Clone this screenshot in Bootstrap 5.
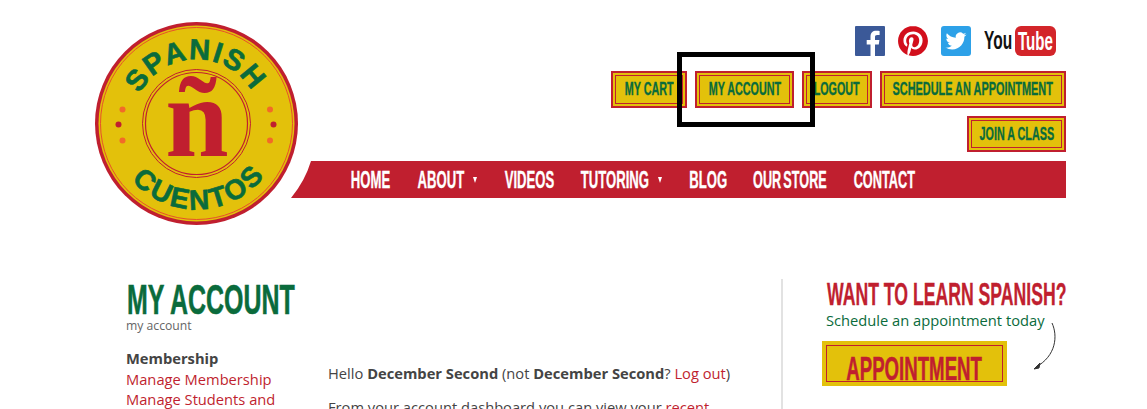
<!DOCTYPE html>
<html lang="en">
<head>
<meta charset="utf-8">
<title>My Account</title>
<link href="https://cdn.jsdelivr.net/npm/bootstrap@5.3.0/dist/css/bootstrap.min.css" rel="stylesheet">
<style>
html,body{height:409px;overflow:hidden;background:#fff}
body{font-family:"Open Sans",sans-serif;font-size:14.7px;line-height:20px;color:#444}
.sc-page{position:relative;width:1147px;height:409px;overflow:hidden;padding:22px 81px 0 95px}
.sc-logo{width:203px;height:203px;flex:none;position:relative;z-index:2;display:block}
.sc-head{height:257px}
.sc-right{flex:1;margin-left:-7px;padding-top:4px;min-width:0}
.sc-social{gap:13px;padding-right:10px;height:30px;margin-bottom:15px}
.sc-btns{width:455px;gap:8px;height:90px;margin-bottom:0}
.sc-narrow{font-family:"Liberation Sans",sans-serif;font-weight:700;white-space:nowrap;display:inline-block;transform-origin:center;text-transform:uppercase;-webkit-text-stroke:.35px currentColor}
.sc-btn{height:37px;background:#e3c10b;border:2px solid #c01f2f;box-shadow:inset 0 0 0 2px #e3c10b,inset 0 0 0 3px #c01f2f;color:#0a6b3c;font-size:19px;border-radius:0;padding:0;text-decoration:none}
.sc-btn .sc-narrow{transform:scaleX(.566)}
.sc-btn.w-sched .sc-narrow{transform:scaleX(.574)}
.w-cart{width:76px}.w-acct{width:99px}.w-out{width:70px}.w-sched{width:186px}.w-join{width:99px;height:36px}
.sc-menu{height:37px;background:#c01f2f;clip-path:path('M20 0H775V37H0Q14 20 20 0Z');padding-left:60px;gap:28px;margin:0}
.sc-menu a{color:#fff;font-size:23px;line-height:38px;padding:0;text-decoration:none;display:flex;justify-content:center}
.sc-menu .sc-narrow{transform:scaleX(.57)}
.sc-menu .m-store .sc-narrow{word-spacing:-2.5px;transform:scaleX(.55)}
.sc-menu .m-contact .sc-narrow{transform:scaleX(.555)}
.m-home{width:39px}.m-about{width:45px}.m-videos{width:48px}.m-tutor{width:67px}.m-blog{width:36px}.m-store{width:74px;margin-left:-1px}.m-contact{width:61px;margin-left:-1px}
.sc-caret{width:0;height:0;border-left:2.5px solid transparent;border-right:2.5px solid transparent;border-top:6px solid #fff;margin-left:10px;align-self:center}
.sc-drop{display:flex}
.sc-main{padding-left:31px;height:130px}
.sc-left{width:202px;flex:none}
.sc-left b{display:block;margin-bottom:1px}
.sc-title{font-size:43px;line-height:36px;color:#0a6b3c;margin:1px 0 0 1px;height:36px;font-weight:700}
.sc-title .sc-narrow{transform:scaleX(.58);transform-origin:left;-webkit-text-stroke:.6px currentColor}
.sc-sub{font-size:12.2px;line-height:14px;color:#666;margin-bottom:15px;margin-top:3px}
.sc-left a,.sc-body a{color:#c01f2f;text-decoration:none}
.sc-left b,.sc-body b{color:#444}
.sc-body{width:453px;flex:none;padding-top:84px}
.sc-body p{margin:0 0 14px;line-height:20px}
.sc-aside{flex:1;border-left:2px solid #e2e2e2;padding-left:43.500px;position:relative}
.sc-want{font-size:31px;line-height:30px;color:#c01f2f;height:30px;font-weight:700;margin:-1px 0 1px}
.sc-want .sc-narrow{transform:scaleX(.569);transform-origin:left}
.sc-aside p{color:#0a6b3c;font-size:14.7px;line-height:20px;margin:2px 0 11px -.5px}
.sc-appt{width:185px;height:45px;margin-left:-5px;background:#e3c10b;box-shadow:inset 0 0 0 4px #e3c10b,inset 0 0 0 5px #c01f2f;color:#c01f2f;font-size:33px;border:0;border-radius:0;padding:11px 0 0 1px;text-decoration:none}
.sc-appt .sc-narrow{transform:scaleX(.565);-webkit-text-stroke:.5px currentColor}
.sc-arrow{position:absolute;left:250px;top:43px}
.sc-hilite{position:absolute;left:677px;top:52px;width:138px;height:75px;border:5px solid #000;pointer-events:none;z-index:3}
</style>
</head>
<body>
<div class="sc-page">
  <header class="sc-head d-flex">
    <svg class="sc-logo" viewBox="0 0 203 203" role="img" aria-label="Spanish Cuentos">
      <defs>
        <path id="arcTop" d="M37.5 101.5a64 64 0 0 1 128 0"/>
        <path id="arcBot" d="M15.5 101.5a86 86 0 0 0 172 0"/>
      </defs>
      <circle cx="101.5" cy="101.5" r="101.5" fill="#c01f2f"/>
      <circle cx="101.5" cy="101.5" r="98" fill="#e3c10b"/>
      <circle cx="101.5" cy="101.5" r="96" fill="none" stroke="#e8502a" stroke-width="1"/>
      <circle cx="101.5" cy="101.5" r="54" fill="none" stroke="#c01f2f" stroke-width="1"/>
      <circle cx="101.5" cy="101.5" r="51" fill="none" stroke="#c01f2f" stroke-width="1.2"/>
      <circle cx="27.5" cy="87.5" r="3" fill="#f26a28"/><circle cx="23.5" cy="102.500" r="3" fill="#c01f2f"/><circle cx="27.500" cy="118.500" r="3" fill="#f26a28"/>
      <circle cx="175" cy="87.5" r="3" fill="#f26a28"/><circle cx="178.500" cy="102.500" r="3" fill="#c01f2f"/><circle cx="175" cy="118.500" r="3" fill="#f26a28"/>
      <text font-family="'Liberation Sans',sans-serif" font-weight="700" font-size="29" fill="#0a6b3c" stroke="#0a6b3c" stroke-width=".6" letter-spacing="1.500" text-anchor="middle"><textPath href="#arcTop" startOffset="49.5%">SPANISH</textPath></text>
      <text font-family="'Liberation Sans',sans-serif" font-weight="700" font-size="28" fill="#0a6b3c" stroke="#0a6b3c" stroke-width=".6" letter-spacing="2.500" text-anchor="middle"><textPath href="#arcBot" startOffset="51.3%">CUENTOS</textPath></text>
      <text x="102" y="133.500" font-family="'Liberation Serif',serif" font-weight="700" font-size="114" fill="#c01f2f" text-anchor="middle">ñ</text>
    </svg>
    <div class="sc-right">
      <div class="sc-social d-flex justify-content-end">
        <a href="#" aria-label="Facebook"><svg width="30" height="30" viewBox="0 0 30 30" class="d-block"><rect width="30" height="30" rx="1" fill="#3b5998"/><path fill="#fff" d="M20 30V18.500h3.800l.6-4.500H20v-2.800c0-1.300.4-2.200 2.200-2.200h2.400v-4c-.4-.1-1.800-.2-3.400-.2-3.400 0-5.700 2-5.700 5.900V14h-3.800v4.500h3.800V30z"/></svg></a>
        <a href="#" aria-label="Pinterest"><svg width="30" height="30" viewBox="0 0 24 24" class="d-block"><circle cx="12" cy="12" r="11.500" fill="#fff"/><path fill="#d20f1c" d="M12.017 0C5.396 0 .029 5.367.029 11.987c0 5.079 3.158 9.417 7.618 11.162-.105-.949-.199-2.403.041-3.439.219-.937 1.406-5.957 1.406-5.957s-.359-.72-.359-1.781c0-1.663.967-2.911 2.168-2.911 1.024 0 1.518.769 1.518 1.688 0 1.029-.653 2.567-.992 3.992-.285 1.193.6 2.165 1.775 2.165 2.128 0 3.768-2.245 3.768-5.487 0-2.861-2.063-4.869-5.008-4.869-3.410 0-5.409 2.562-5.409 5.199 0 1.033.394 2.143.889 2.741.099.12.112.225.085.345-.09.375-.293 1.199-.334 1.363-.053.225-.172.271-.401.165-1.495-.69-2.433-2.878-2.433-4.646 0-3.776 2.748-7.252 7.920-7.252 4.158 0 7.392 2.967 7.392 6.923 0 4.135-2.607 7.462-6.233 7.462-1.214 0-2.354-.629-2.758-1.379l-.749 2.848c-.269 1.045-1.004 2.352-1.498 3.146 1.123.345 2.306.535 3.550.535 6.607 0 11.985-5.365 11.985-11.987C23.970 5.390 18.592.026 11.985.026L12.017 0z"/></svg></a>
        <a href="#" aria-label="Twitter"><svg width="30" height="30" viewBox="0 0 30 30" class="d-block"><rect width="30" height="30" rx="3" fill="#2da1e8"/><path fill="#fff" transform="translate(4.500 4.500) scale(.875)" d="M23.953 4.570a10 10 0 01-2.825.775 4.958 4.958 0 002.163-2.723c-.951.555-2.005.959-3.127 1.184a4.920 4.920 0 00-8.384 4.482C7.690 8.095 4.067 6.130 1.640 3.162a4.822 4.822 0 00-.666 2.475c0 1.710.870 3.213 2.188 4.096a4.904 4.904 0 01-2.228-.616v.06a4.923 4.923 0 003.946 4.827 4.996 4.996 0 01-2.212.085 4.936 4.936 0 004.604 3.417 9.867 9.867 0 01-6.102 2.105c-.39 0-.779-.023-1.170-.067a13.995 13.995 0 007.557 2.209c9.053 0 13.998-7.496 13.998-13.985 0-.21 0-.42-.015-.63A9.935 9.935 0 0024 4.590z"/></svg></a>
        <a href="#" aria-label="YouTube"><svg width="72" height="30" viewBox="0 0 72 30" class="d-block"><rect x="31" y="0" width="41" height="30" rx="6" fill="#d3252a"/><text transform="translate(0 23) scale(.62 1)" font-family="'Liberation Sans',sans-serif" font-weight="700" font-size="25" fill="#111">You</text><text transform="translate(34 23.500) scale(.58 1)" font-family="'Liberation Sans',sans-serif" font-weight="700" font-size="26" fill="#fff">Tube</text></svg></a>
      </div>
      <div class="d-flex justify-content-end">
        <div class="sc-btns d-flex flex-wrap justify-content-end align-content-start">
          <a href="#" class="sc-btn btn d-flex align-items-center justify-content-center w-cart"><span class="sc-narrow">My Cart</span></a>
          <a href="#" class="sc-btn btn d-flex align-items-center justify-content-center w-acct"><span class="sc-narrow">My Account</span></a>
          <a href="#" class="sc-btn btn d-flex align-items-center justify-content-center w-out"><span class="sc-narrow">Logout</span></a>
          <a href="#" class="sc-btn btn d-flex align-items-center justify-content-center w-sched"><span class="sc-narrow">Schedule an appointment</span></a>
          <a href="#" class="sc-btn btn d-flex align-items-center justify-content-center w-join"><span class="sc-narrow">Join a class</span></a>
        </div>
      </div>
      <ul class="sc-menu nav flex-nowrap">
        <li><a href="#" class="m-home"><span class="sc-narrow">Home</span></a></li>
        <li class="sc-drop"><a href="#" class="m-about"><span class="sc-narrow">About</span></a><i class="sc-caret"></i></li>
        <li><a href="#" class="m-videos"><span class="sc-narrow">Videos</span></a></li>
        <li class="sc-drop"><a href="#" class="m-tutor"><span class="sc-narrow">Tutoring</span></a><i class="sc-caret"></i></li>
        <li><a href="#" class="m-blog"><span class="sc-narrow">Blog</span></a></li>
        <li><a href="#" class="m-store"><span class="sc-narrow">Our Store</span></a></li>
        <li><a href="#" class="m-contact"><span class="sc-narrow">Contact</span></a></li>
      </ul>
    </div>
  </header>
  <main class="sc-main d-flex">
    <div class="sc-left">
      <h1 class="sc-title"><span class="sc-narrow">My Account</span></h1>
      <div class="sc-sub">my account</div>
      <b>Membership</b>
      <a href="#">Manage Membership</a><br>
      <a href="#">Manage Students and</a>
    </div>
    <div class="sc-body">
      <p>Hello <b>December Second</b> (not <b>December Second</b>? <a href="#">Log out</a>)</p>
      <p>From your account dashboard you can view your <a href="#">recent</a></p>
    </div>
    <aside class="sc-aside">
      <h2 class="sc-want"><span class="sc-narrow">Want to learn Spanish?</span></h2>
      <p>Schedule an appointment today</p>
      <a href="#" class="sc-appt btn d-flex align-items-center justify-content-center"><span class="sc-narrow">Appointment</span></a>
      <svg class="sc-arrow" width="26" height="50" viewBox="0 0 26 50" fill="none" stroke="#333" stroke-width="1"><path d="M19 1C25 14 23 34 3 45"/><path d="M1 47l6-6-1 5z" fill="#333"/></svg>
    </aside>
  </main>
  <div class="sc-hilite"></div>
</div>
<script src="https://cdn.jsdelivr.net/npm/bootstrap@5.3.0/dist/js/bootstrap.bundle.min.js"></script>
</body>
</html>
